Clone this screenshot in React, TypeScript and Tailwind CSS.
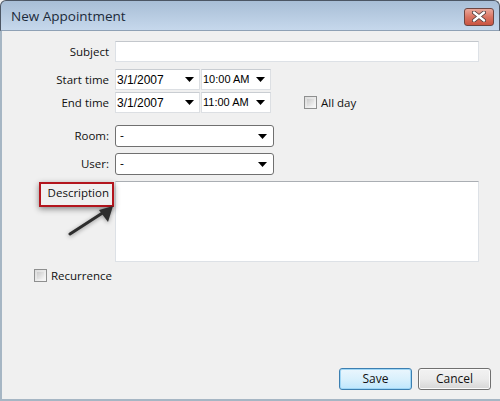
import React from "react";

const ui = { fontFamily: '"Open Sans", "Noto Sans", sans-serif' };
const tahoma = { fontFamily: '"Liberation Sans", Arial, sans-serif' };

function Caret() {
    return (
        <svg width="9" height="5" viewBox="0 0 9 5" className="shrink-0">
            <path d="M0 0 H9 L4.5 5 Z" fill="#000" />
        </svg>
    );
}

function ComboBox({ value, width, size }: { value: string; width: string; size: string }) {
    return (
        <div
            className={`${width} ${size} h-[21px] bg-white border border-[#dcdfe3] border-t-[#c9cdd2] flex items-center pl-[1px] pr-[5px] text-black`}
            style={tahoma}
        >
            <span className="flex-1">{value}</span>
            <Caret />
        </div>
    );
}

function Select({ value }: { value: string }) {
    return (
        <div className="w-[159px] h-[22px] bg-white border border-[#707070] rounded-[3px] flex items-center pl-[4px] pr-[6px] text-[12px]">
            <span className="flex-1">{value}</span>
            <Caret />
        </div>
    );
}

function CheckBox() {
    return (
        <div className="w-[13px] h-[13px] border border-[#8e8f8f] bg-gradient-to-br from-[#dcdcdc] to-[#f8f8f8] p-[2px]">
            <div className="w-full h-full bg-gradient-to-br from-[#cbcbcb] to-[#f4f4f4]" />
        </div>
    );
}

function Label({ children }: { children: React.ReactNode }) {
    return <div className="w-[113px] pr-[6px] text-right shrink-0">{children}</div>;
}

export default function App() {
    return (
        <div className="w-[500px] h-[401px] flex flex-col bg-[#f0f0f0] text-[11.5px] text-[#111]" style={ui}>
            {/* Title bar */}
            <div className="h-[31px] flex items-center justify-between pl-[10px] pr-[5px] bg-gradient-to-b from-[#a8bed6] to-[#c6d8ec] border-t border-l border-r border-[#4c5664] border-b-[#8fa1b5] border-b rounded-t-[6px]">
                <span className="text-[13.5px] text-[#1b2a3a] mt-[1px]">New Appointment</span>
                <div className="w-[30px] h-[18px] mt-[2px] rounded-[3px] border border-[#6e4540] bg-gradient-to-b from-[#eaa89b] via-[#d97462] to-[#c95442] flex items-center justify-center">
                    <svg width="14" height="11" viewBox="0 0 14 11">
                        <path
                            d="M2 1.5 L12 9.5 M12 1.5 L2 9.5"
                            stroke="#4a3a3a"
                            strokeWidth="4"
                            strokeLinecap="round"
                        />
                        <path
                            d="M2 1.5 L12 9.5 M12 1.5 L2 9.5"
                            stroke="#ffffff"
                            strokeWidth="2.4"
                            strokeLinecap="round"
                        />
                    </svg>
                </div>
            </div>

            {/* Body */}
            <div className="flex-1 flex flex-col border-l-2 border-b-2 border-[#a6b6c4] relative">
                <div className="flex items-center mt-[10px]">
                    <Label>Subject</Label>
                    <div className="w-[364px] h-[21px] bg-white border border-[#dde1e6] border-t-[#c3c7cc]" />
                </div>

                <div className="flex items-center mt-[7px]">
                    <Label>Start time</Label>
                    <ComboBox value="3/1/2007" width="w-[85px]" size="text-[12px]" />
                    <div className="w-[1px]" />
                    <ComboBox value="10:00 AM" width="w-[70px]" size="text-[11px]" />
                </div>

                <div className="flex items-center mt-[2px]">
                    <Label>End time</Label>
                    <ComboBox value="3/1/2007" width="w-[85px]" size="text-[12px]" />
                    <div className="w-[1px]" />
                    <ComboBox value="11:00 AM" width="w-[70px]" size="text-[11px]" />
                    <div className="ml-[33px] flex items-center gap-[4px]">
                        <CheckBox />
                        <span>All day</span>
                    </div>
                </div>

                <div className="flex items-center mt-[12px]">
                    <Label>Room:</Label>
                    <Select value="-" />
                </div>

                <div className="flex items-center mt-[6px]">
                    <Label>User:</Label>
                    <Select value="-" />
                </div>

                <div className="flex items-start mt-[6px] relative">
                    <Label>
                        <div className="pt-[3px]">Description</div>
                    </Label>
                    <div className="w-[364px] h-[81px] bg-white border border-[#dde1e6] border-t-[#aaaeb3]" />

                    {/* annotation */}
                    <div className="absolute left-[37px] top-[1px] w-[75px] h-[25px] border-2 border-[#b3151d] shadow-[0_2px_6px_rgba(0,0,0,0.45)]" />
                    <svg
                        className="absolute left-[60px] top-[20px]"
                        width="60"
                        height="40"
                        viewBox="0 0 60 40"
                        style={{ filter: "drop-shadow(0 1px 2px rgba(0,0,0,0.4))" }}
                    >
                        <path d="M8 33 L42 11" stroke="#2e2e2e" strokeWidth="3" strokeLinecap="round" />
                        <path d="M51 5 L37 9 L46 21 Z" fill="#2e2e2e" />
                    </svg>
                </div>

                <div className="flex items-center h-[13px] mt-[7px] ml-[32px] gap-[4px]">
                    <CheckBox />
                    <span>Recurrence</span>
                </div>

                <div className="mt-auto mb-[9px] flex justify-end gap-[6px] pr-[9px] text-[12px]">
                    <button className="w-[73px] h-[22px] rounded-[3px] border border-[#3c7fb1] bg-gradient-to-b from-[#eaf6fd] via-[#d9f0fc] to-[#bee6fd] shadow-[inset_0_0_0_1px_#9fd6f5]">
                        Save
                    </button>
                    <button className="w-[73px] h-[22px] rounded-[3px] border border-[#707070] bg-gradient-to-b from-[#f2f2f2] via-[#ebebeb] to-[#d6d6d6] shadow-[inset_0_0_0_1px_#fbfbfb]">
                        Cancel
                    </button>
                </div>
            </div>
        </div>
    );
}
